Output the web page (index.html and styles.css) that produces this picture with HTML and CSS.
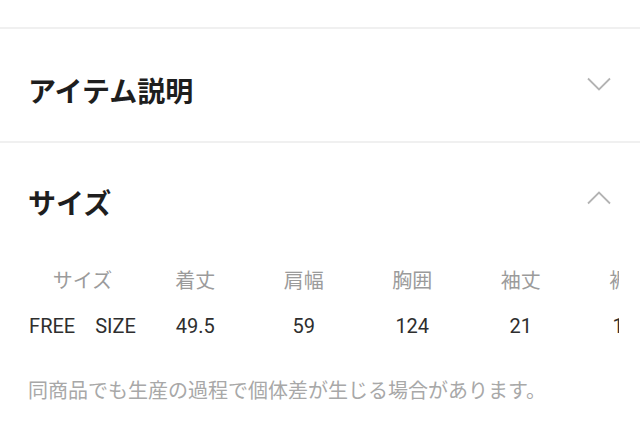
FILE: index.html
```html
<!DOCTYPE html>
<html lang="ja">
<head>
<meta charset="utf-8">
<title>サイズ</title>
<link rel="stylesheet" href="styles.css">
</head>
<body>
<div class="page">
  <div class="top-gap"></div>
  <section class="acc acc-item">
    <div class="acc-head">
      <h2 class="acc-title">アイテム説明</h2>
      <svg class="chev chev-down" width="24" height="14" viewBox="0 0 24 14"><polyline points="1,1.5 12,12.5 23,1.5" fill="none" stroke="#b3b3b3" stroke-width="1.8"/></svg>
    </div>
  </section>
  <section class="acc acc-size">
    <div class="acc-head">
      <h2 class="acc-title">サイズ</h2>
      <svg class="chev chev-up" width="24" height="14" viewBox="0 0 24 14"><polyline points="1,12.5 12,1.5 23,12.5" fill="none" stroke="#b3b3b3" stroke-width="1.8"/></svg>
    </div>
    <div class="table-wrap">
      <div class="size-table">
        <div class="th first">サイズ</div>
        <div class="th">着丈</div>
        <div class="th">肩幅</div>
        <div class="th">胸囲</div>
        <div class="th">袖丈</div>
        <div class="th">裾幅</div>
        <div class="td first">FREE　SIZE</div>
        <div class="td">49.5</div>
        <div class="td">59</div>
        <div class="td">124</div>
        <div class="td">21</div>
        <div class="td">118</div>
      </div>
    </div>
    <p class="note">同商品でも生産の過程で個体差が生じる場合があります。</p>
  </section>
</div>
</body>
</html>
```
FILE: styles.css
```css
html, body {
  margin: 0;
  padding: 0;
  background: #ffffff;
}
body {
  width: 640px;
  height: 430px;
  overflow: hidden;
  font-family: Roboto, "Noto Sans CJK JP", sans-serif;
}
.top-gap {
  height: 27px;
}
.acc {
  border-top: 2px solid #f0f0f0;
}
.acc-item {
  padding: 44px 29px 34px 28px;
}
.acc-size {
  padding: 42px 0 0 0;
}
.acc-size .acc-head {
  padding: 0 29px 0 28px;
}
.acc-head {
  display: flex;
  justify-content: space-between;
  align-items: flex-start;
}
.acc-title {
  margin: 0;
  font-family: "Noto Sans CJK JP", sans-serif;
  font-size: 28px;
  line-height: 34px;
  font-weight: 700;
  color: #1e1e1e;
}
.chev {
  display: block;
  flex: none;
}
.chev-down {
  margin-top: 4px;
}
.chev-up {
  margin-top: 6px;
}
.table-wrap {
  margin: 45px 0 0 27px;
  padding: 4px 0;
  width: 592px;
  overflow: hidden;
}
.size-table {
  display: grid;
  grid-template-columns: 114px repeat(5, 108.5px);
  width: max-content;
  row-gap: 22px;
}
.th, .td {
  text-align: center;
  font-size: 20px;
  line-height: 24px;
  white-space: nowrap;
}
.th {
  font-family: "Noto Sans CJK JP", sans-serif;
  color: #9b9b9b;
}
.td {
  color: #2e2e2e;
}
.first {
  padding-right: 3px;
}
.note {
  margin: 36px 0 0 28px;
  font-family: "Noto Sans CJK JP", sans-serif;
  font-size: 20px;
  line-height: 24px;
  color: #a8a8a8;
  white-space: nowrap;
}
```
